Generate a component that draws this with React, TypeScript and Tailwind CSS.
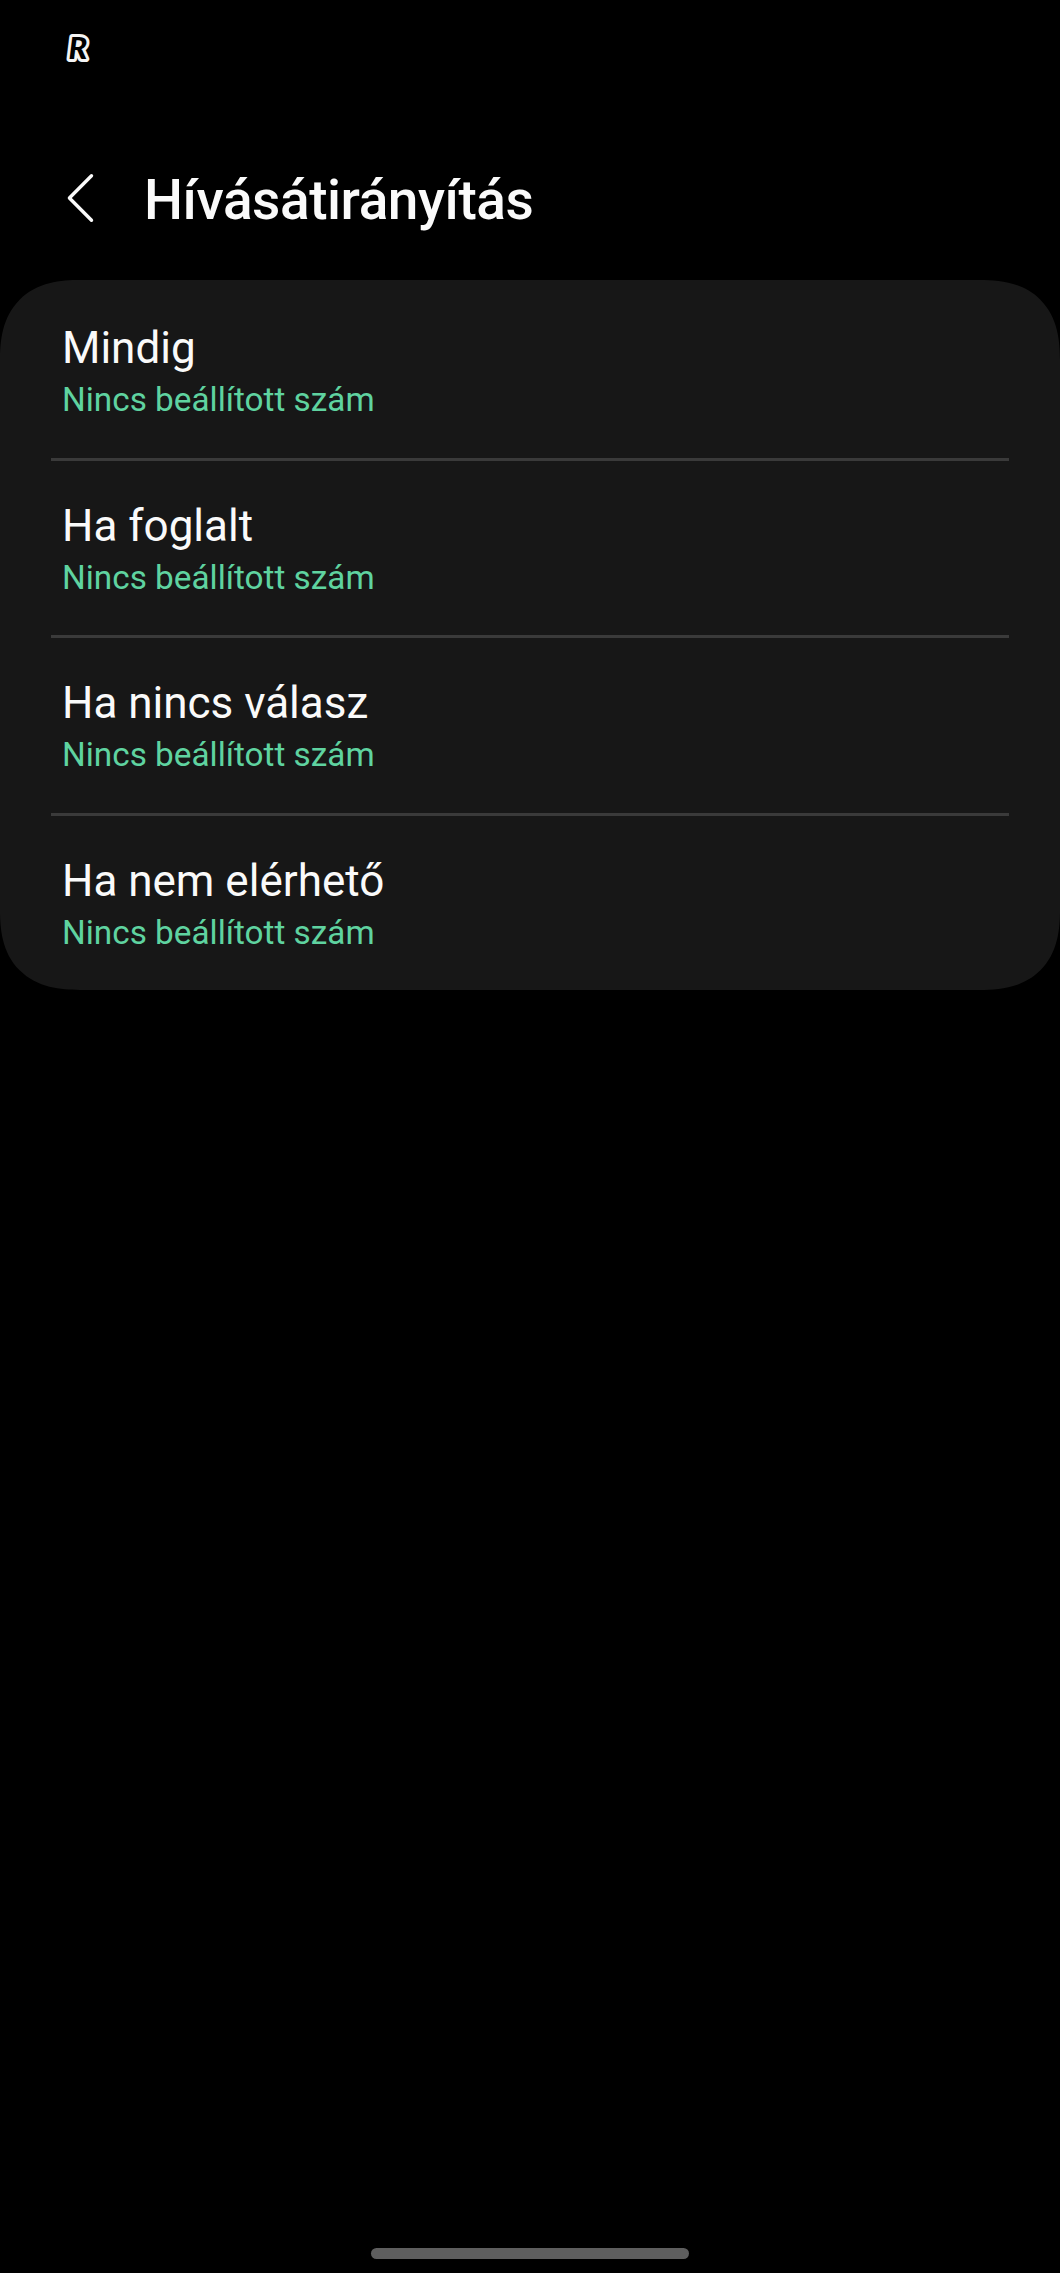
import React from "react";

const options = [
  { id: 1, name: "Mindig" },
  { id: 2, name: "Ha foglalt" },
  { id: 3, name: "Ha nincs válasz" },
  { id: 4, name: "Ha nem elérhető" },
];

const App = () => {
  return (
    <div className="flex h-[2273px] w-[1060px] flex-col overflow-hidden bg-black font-['Roboto',sans-serif] text-[#fafafa]">
      <div className="flex h-[96px] items-center pl-[58px]">
        <svg width="44" height="56" viewBox="-8 -12 44 56" className="overflow-visible">
          <text
            x="2.6"
            y="26.6"
            fontSize="31"
            fill="#000000"
            stroke="#f4f4f4"
            strokeWidth="6"
            strokeLinejoin="round"
            paintOrder="stroke"
            className="font-['Lato',sans-serif] font-black italic"
          >
            R
          </text>
        </svg>
      </div>

      <header className="flex h-[184px] items-center">
        <svg
          className="ml-[65px] mt-[20px] shrink-0"
          width="32"
          height="52"
          viewBox="0 0 32 52"
          fill="none"
        >
          <path
            d="M26.5 3.8L4.4 26L26.5 48.3"
            stroke="#fafafa"
            strokeWidth="3.4"
            strokeLinecap="round"
            strokeLinejoin="round"
          />
        </svg>
        <h1 className="ml-[47px] mt-[24px] text-[55px] leading-[64px] font-medium tracking-[-0.45px]">
          Hívásátirányítás
        </h1>
      </header>

      <ul className="h-[710px] rounded-[72px] bg-[#171717] supports-[corner-shape:superellipse(1.3)]:rounded-[80px] [corner-shape:superellipse(1.3)]">
        {options.map((option, index) => (
          <li key={option.id} className="flex h-[177.5px] flex-col">
            <div className="grow pt-[42px] pl-[62px]">
              <p className="text-[44px] leading-[52px]">{option.name}</p>
              <p className="mt-[6px] text-[33.3px] leading-[40px] text-[#5fd3a0]">
                Nincs beállított szám
              </p>
            </div>
            {index < options.length - 1 && (
              <div className="mr-[51px] -mb-[3px] ml-[51px] h-[3px] shrink-0 bg-[#3a3a3a]" />
            )}
          </li>
        ))}
      </ul>

      <div className="mx-auto mt-auto mb-[14px] h-[11px] w-[318px] shrink-0 rounded-full bg-[#5e5e5e]" />
    </div>
  );
};

export default App;
